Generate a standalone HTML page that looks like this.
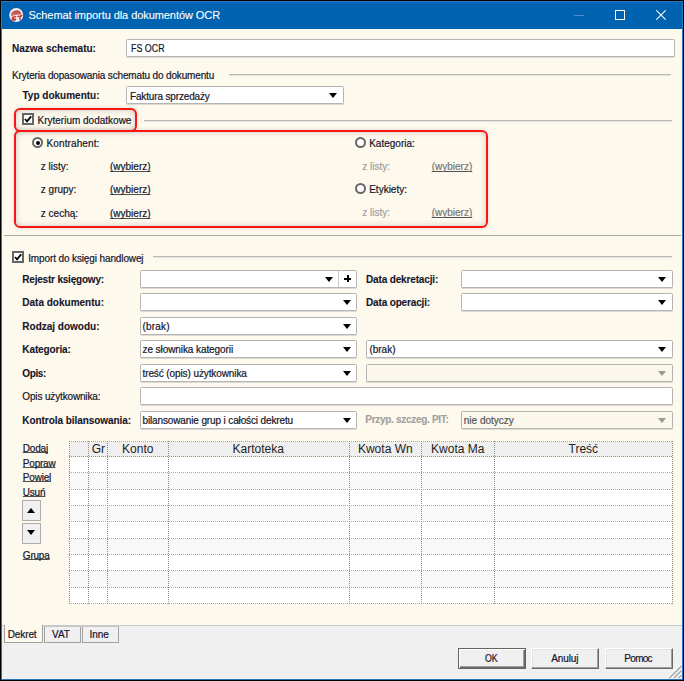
<!DOCTYPE html><html><head><meta charset="utf-8"><style>html,body{margin:0;padding:0;}
body{width:684px;height:681px;position:relative;overflow:hidden;background:#000;font-family:"Liberation Sans",sans-serif;font-size:10px;color:#15152a;}
.a{position:absolute;}
.t{position:absolute;white-space:nowrap;line-height:12px;-webkit-text-stroke:0.2px currentColor;}
.b{-webkit-text-stroke:0.1px currentColor;}
.b{font-weight:bold;}
#win{position:absolute;left:1px;top:1px;width:682px;height:679px;background:#2776bb;}
#title{position:absolute;left:2px;top:2px;width:680px;height:27px;background:#0063b1;}
#client{position:absolute;left:2px;top:29px;width:680px;height:650px;background:#fef9ed;}
.fld{position:absolute;background:#fff;border:1px solid #b4b4b4;border-radius:1.5px;box-sizing:border-box;height:18px;box-shadow:0 1px 0 #dcdad2;}
.fld.dis{background:#fbf7ec;}
.arr{position:absolute;width:0;height:0;border-left:4.5px solid transparent;border-right:4.5px solid transparent;border-top:5px solid #000;}
.arr.g{border-top-color:#9a9a9a;}
.gl{position:absolute;height:1px;background:#b9b9b6;box-shadow:0 1px 0 #e2e2df;}
.lnk{text-decoration:underline;text-decoration-skip-ink:none;text-decoration-thickness:1px;text-underline-offset:0px;text-decoration-color:#505050;}
.gray{color:#a0a0a0;}
.gray2{color:#777;}
.redbox{box-sizing:border-box;border:2px solid #fa1414;border-radius:6px;box-shadow:inset 0 0 6px rgba(0,0,0,0.2), 0 0 4px rgba(0,0,0,0.12);}
.chk{position:absolute;width:12px;height:12px;box-sizing:border-box;border:2px solid #666;background:#fff;}
.rad{position:absolute;width:11px;height:11px;box-sizing:border-box;border:2px solid #666;border-radius:50%;background:#fff;}
.sbtn{position:absolute;width:19px;height:21px;box-sizing:border-box;border:1px solid #adadad;background:#f0f0f0;}
.tab{position:absolute;box-sizing:border-box;border:1px solid #a0a0a0;border-top-color:#c8c8c8;background:#f0f0f0;}
.tab.act{background:#fef9ed;border-top:none;}
.btn{position:absolute;box-sizing:border-box;background:#f0f0f0;border:1px solid;border-color:#fff #696969 #696969 #fff;box-shadow:inset -1px -1px 0 #a0a0a0, inset 1px 1px 0 #e3e3e3;}
.btn.def{border-color:#646464;box-shadow:inset 1px 1px 0 #fff, inset -1px -1px 0 #696969, inset -2px -2px 0 #a0a0a0;}
</style></head><body>
<div id="win"></div><div id="title"></div><div id="client"></div>
<svg class="a" style="left:8px;top:7px" width="17" height="17" viewBox="0 0 17 17">
<defs><linearGradient id="dg" x1="0" y1="0" x2="0" y2="1"><stop offset="0" stop-color="#b04848"/><stop offset="1" stop-color="#d77a7a"/></linearGradient></defs>
<circle cx="8.2" cy="8" r="7" fill="#f4eded"/>
<path d="M3 9.2 A5.4 5.4 0 0 1 13.6 7.4 Q8.5 7.2 3 9.2 Z" fill="url(#dg)"/>
<path d="M8.2 9.9 Q4.6 9.6 4.2 11 Q4.4 11.9 6.4 11.9 Q7.9 12.1 7.2 12.9 L3.6 12.9" stroke="#c83c3c" stroke-width="1.5" fill="none"/>
<path d="M9.2 9.1 L15.4 7.6 L13.2 9.9 L12.7 9.9 L12.7 13 L11.2 13 L11.2 9.9 L9.2 9.9 Z" fill="#c83c3c"/>
</svg>
<div class="t " style="left:28.6px;top:9.09px;font-size:11px;color:#fff;letter-spacing:-0.07px;-webkit-text-stroke:0.1px #fff">Schemat importu dla dokumentów OCR</div>
<div class="a" style="left:574px;top:15px;width:10px;height:1px;background:#4d8fcc"></div>
<div class="a" style="left:615px;top:10px;width:10px;height:10px;box-sizing:border-box;border:1px solid #fff"></div>
<svg class="a" style="left:656px;top:10px" width="10" height="10" viewBox="0 0 10 10"><path d="M0.3 0.3 L9.7 9.7 M9.7 0.3 L0.3 9.7" stroke="#fff" stroke-width="1.05"/></svg>
<div class="t b" style="left:12px;top:43.33px;font-size:10px;">Nazwa schematu:</div>
<div class="fld " style="left:126px;top:39px;width:549px;height:18px"></div>
<div class="t " style="left:130.5px;top:43.33px;font-size:10px;transform:scaleX(0.89);transform-origin:0 0">FS OCR</div>
<div class="t " style="left:12px;top:70.33px;font-size:10px;letter-spacing:-0.15px">Kryteria dopasowania schematu do dokumentu</div>
<div class="gl" style="left:229px;top:74px;width:442px"></div>
<div class="t b" style="left:22.5px;top:90.33px;font-size:10px;">Typ dokumentu:</div>
<div class="fld " style="left:126px;top:86px;width:218px;height:18px"></div>
<div class="t " style="left:130px;top:90.83px;font-size:10px;letter-spacing:-0.15px">Faktura sprzedaży</div>
<div class="arr " style="left:329px;top:93px"></div>
<div class="a redbox" style="left:14px;top:108px;width:123px;height:24px;"></div>
<div class="chk" style="left:22px;top:113px"></div>
<svg class="a" style="left:22px;top:113px" width="12" height="12" viewBox="0 0 12 12"><path d="M3 6 L5 8.3 L9.2 3.3" fill="none" stroke="#000" stroke-width="1.8"/></svg>
<div class="t " style="left:37.5px;top:114.93px;font-size:10px;">Kryterium dodatkowe</div>
<div class="gl" style="left:144px;top:120px;width:528px"></div>
<div class="a redbox" style="left:14px;top:130px;width:474px;height:98px;"></div>
<div class="rad" style="left:32px;top:137px"></div><div class="a" style="left:35.5px;top:140.5px;width:4px;height:4px;border-radius:50%;background:#000"></div>
<div class="t " style="left:46.6px;top:138.14px;font-size:10px;letter-spacing:0.1px">Kontrahent:</div>
<div class="t " style="left:40.8px;top:160.84px;font-size:10px;">z listy:</div>
<div class="t " style="left:40.8px;top:184.34px;font-size:10px;">z grupy:</div>
<div class="t " style="left:40.8px;top:207.84px;font-size:10px;">z cechą:</div>
<div class="t lnk" style="left:110px;top:160.84px;font-size:10px;text-underline-offset:1px">(wybierz)</div>
<div class="t lnk" style="left:110px;top:184.34px;font-size:10px;text-underline-offset:1px">(wybierz)</div>
<div class="t lnk" style="left:110px;top:207.84px;font-size:10px;text-underline-offset:1px">(wybierz)</div>
<div class="rad" style="left:354.5px;top:137px"></div>
<div class="t " style="left:369.2px;top:138.14px;font-size:10px;">Kategoria:</div>
<div class="t gray" style="left:362.2px;top:160.84px;font-size:10px;">z listy:</div>
<div class="t lnk gray2" style="left:431.7px;top:160.84px;font-size:10px;text-underline-offset:1px">(wybierz)</div>
<div class="rad" style="left:354.5px;top:183px"></div>
<div class="t " style="left:369.2px;top:184.14px;font-size:10px;">Etykiety:</div>
<div class="t gray" style="left:362.2px;top:207.03px;font-size:10px;">z listy:</div>
<div class="t lnk gray2" style="left:431.7px;top:207.03px;font-size:10px;text-underline-offset:1px">(wybierz)</div>
<div class="gl" style="left:4px;top:235px;width:677px;background:#a8a8a8;box-shadow:none"></div>
<div class="chk" style="left:12px;top:251px"></div>
<svg class="a" style="left:12px;top:251px" width="12" height="12" viewBox="0 0 12 12"><path d="M3 6 L5 8.3 L9.2 3.3" fill="none" stroke="#000" stroke-width="1.8"/></svg>
<div class="t " style="left:28.2px;top:252.84px;font-size:10px;letter-spacing:-0.12px">Import do księgi handlowej</div>
<div class="gl" style="left:153px;top:256px;width:519px"></div>
<div class="t b" style="left:22.3px;top:273.94px;font-size:10px;letter-spacing:-0.2px">Rejestr księgowy:</div>
<div class="t b" style="left:22.3px;top:296.94px;font-size:10px;letter-spacing:0px">Data dokumentu:</div>
<div class="t b" style="left:22.3px;top:320.94px;font-size:10px;letter-spacing:0px">Rodzaj dowodu:</div>
<div class="t b" style="left:22.3px;top:343.94px;font-size:10px;letter-spacing:-0.1px">Kategoria:</div>
<div class="t b" style="left:22.3px;top:367.94px;font-size:10px;letter-spacing:-0.4px">Opis:</div>
<div class="t " style="left:22.3px;top:390.94px;font-size:10px;letter-spacing:-0.15px">Opis użytkownika:</div>
<div class="t b" style="left:22.3px;top:414.94px;font-size:10px;letter-spacing:-0.06px">Kontrola bilansowania:</div>
<div class="fld " style="left:140px;top:270px;width:217px;height:18px"></div>
<div class="a" style="left:338px;top:271px;width:1px;height:16px;background:#c8c8c8"></div>
<div class="arr " style="left:325px;top:277px"></div>
<div class="a" style="left:344px;top:277.5px;width:7px;height:2px;background:#000"></div><div class="a" style="left:346.5px;top:275px;width:2px;height:7px;background:#000"></div>
<div class="t b" style="left:366px;top:273.94px;font-size:10px;letter-spacing:-0.15px">Data dekretacji:</div>
<div class="fld " style="left:461px;top:270px;width:212px;height:18px"></div>
<div class="arr " style="left:658px;top:276.5px"></div>
<div class="fld " style="left:140px;top:293px;width:217px;height:18px"></div>
<div class="arr " style="left:343px;top:300px"></div>
<div class="t b" style="left:366px;top:296.94px;font-size:10px;letter-spacing:-0.15px">Data operacji:</div>
<div class="fld " style="left:461px;top:293px;width:212px;height:18px"></div>
<div class="arr " style="left:658px;top:300px"></div>
<div class="fld " style="left:140px;top:317px;width:217px;height:18px"></div>
<div class="t " style="left:142.5px;top:320.94px;font-size:10px;letter-spacing:0.2px">(brak)</div>
<div class="arr " style="left:343px;top:323.5px"></div>
<div class="fld " style="left:140px;top:340px;width:217px;height:18px"></div>
<div class="t " style="left:142.5px;top:343.94px;font-size:10px;letter-spacing:-0.08px">ze słownika kategorii</div>
<div class="arr " style="left:343px;top:347px"></div>
<div class="fld " style="left:366px;top:340px;width:307px;height:18px"></div>
<div class="t " style="left:369.4px;top:343.94px;font-size:10px;">(brak)</div>
<div class="arr " style="left:658px;top:347px"></div>
<div class="fld " style="left:140px;top:364px;width:217px;height:18px"></div>
<div class="t " style="left:142.5px;top:367.94px;font-size:10px;letter-spacing:-0.1px">treść (opis) użytkownika</div>
<div class="arr " style="left:343px;top:370.5px"></div>
<div class="fld dis" style="left:366px;top:364px;width:307px;height:18px"></div>
<div class="arr g" style="left:658px;top:370.5px"></div>
<div class="fld " style="left:140px;top:387px;width:533px;height:18px"></div>
<div class="fld " style="left:140px;top:411px;width:217px;height:18px"></div>
<div class="t " style="left:142.5px;top:414.94px;font-size:10px;letter-spacing:-0.13px">bilansowanie grup i całości dekretu</div>
<div class="arr " style="left:343px;top:417.5px"></div>
<div class="t b gray" style="left:365.3px;top:414.44px;font-size:10px;letter-spacing:-0.3px">Przyp. szczeg. PIT:</div>
<div class="fld dis" style="left:461px;top:411px;width:212px;height:18px"></div>
<div class="t " style="left:463.8px;top:414.94px;font-size:10px;color:#555">nie dotyczy</div>
<div class="arr g" style="left:658px;top:417.5px"></div>
<div class="t lnk" style="left:22.8px;top:442.74px;font-size:10px;letter-spacing:-0.2px">Dodaj</div>
<div class="t lnk" style="left:22.8px;top:457.74px;font-size:10px;letter-spacing:-0.2px">Popraw</div>
<div class="t lnk" style="left:22.8px;top:472.34px;font-size:10px;letter-spacing:-0.2px">Powiel</div>
<div class="t lnk" style="left:22.8px;top:486.94px;font-size:10px;letter-spacing:-0.2px">Usuń</div>
<div class="t lnk" style="left:22.8px;top:549.63px;font-size:10px;letter-spacing:-0.2px">Grupa</div>
<div class="sbtn" style="left:22px;top:500px"></div>
<div class="sbtn" style="left:22px;top:523px"></div>
<div class="a" style="left:27px;top:508px;width:0;height:0;border-left:4.5px solid transparent;border-right:4.5px solid transparent;border-bottom:5px solid #000"></div>
<div class="arr " style="left:27px;top:530px"></div>
<svg class="a" style="left:0;top:0" width="684" height="681" shape-rendering="crispEdges"><rect x="70" y="442" width="602" height="14" fill="#efefef"/><rect x="70" y="457" width="602" height="146" fill="#fff"/><rect x="70" y="473" width="602" height="16" fill="#f9f9f9"/><rect x="70" y="506" width="602" height="15" fill="#f9f9f9"/><rect x="70" y="539" width="602" height="15" fill="#f9f9f9"/><rect x="70" y="571" width="602" height="16" fill="#f9f9f9"/><line x1="69" y1="441.5" x2="673" y2="441.5" stroke="#a8a8a8" stroke-dasharray="1 1"/><line x1="69" y1="456.5" x2="673" y2="456.5" stroke="#8a8a8a" stroke-dasharray="1 1"/><line x1="69" y1="472.5" x2="673" y2="472.5" stroke="#a8a8a8" stroke-dasharray="1 1"/><line x1="69" y1="489.5" x2="673" y2="489.5" stroke="#a8a8a8" stroke-dasharray="1 1"/><line x1="69" y1="505.5" x2="673" y2="505.5" stroke="#a8a8a8" stroke-dasharray="1 1"/><line x1="69" y1="521.5" x2="673" y2="521.5" stroke="#a8a8a8" stroke-dasharray="1 1"/><line x1="69" y1="538.5" x2="673" y2="538.5" stroke="#a8a8a8" stroke-dasharray="1 1"/><line x1="69" y1="554.5" x2="673" y2="554.5" stroke="#a8a8a8" stroke-dasharray="1 1"/><line x1="69" y1="570.5" x2="673" y2="570.5" stroke="#a8a8a8" stroke-dasharray="1 1"/><line x1="69" y1="587.5" x2="673" y2="587.5" stroke="#a8a8a8" stroke-dasharray="1 1"/><line x1="69" y1="603.5" x2="673" y2="603.5" stroke="#a8a8a8" stroke-dasharray="1 1"/><line x1="69.5" y1="441" x2="69.5" y2="604" stroke="#8c8c8c" stroke-dasharray="1 1"/><line x1="88.5" y1="441" x2="88.5" y2="604" stroke="#8c8c8c" stroke-dasharray="1 1"/><line x1="107.5" y1="441" x2="107.5" y2="604" stroke="#8c8c8c" stroke-dasharray="1 1"/><line x1="168.5" y1="441" x2="168.5" y2="604" stroke="#8c8c8c" stroke-dasharray="1 1"/><line x1="349.5" y1="441" x2="349.5" y2="604" stroke="#8c8c8c" stroke-dasharray="1 1"/><line x1="421.5" y1="441" x2="421.5" y2="604" stroke="#8c8c8c" stroke-dasharray="1 1"/><line x1="494.5" y1="441" x2="494.5" y2="604" stroke="#8c8c8c" stroke-dasharray="1 1"/><line x1="672.5" y1="441" x2="672.5" y2="604" stroke="#8c8c8c" stroke-dasharray="1 1"/></svg>
<div class="t" style="left:38.400000000000006px;width:120px;text-align:center;top:442.10px;font-size:12px;line-height:14px;color:#222;-webkit-text-stroke:0">Gr</div>
<div class="t" style="left:77.80000000000001px;width:120px;text-align:center;top:442.10px;font-size:12px;line-height:14px;color:#222;-webkit-text-stroke:0">Konto</div>
<div class="t" style="left:198.2px;width:120px;text-align:center;top:442.10px;font-size:12px;line-height:14px;color:#222;-webkit-text-stroke:0">Kartoteka</div>
<div class="t" style="left:325.3px;width:120px;text-align:center;top:442.10px;font-size:12px;line-height:14px;color:#222;-webkit-text-stroke:0">Kwota Wn</div>
<div class="t" style="left:397.8px;width:120px;text-align:center;top:442.10px;font-size:12px;line-height:14px;color:#222;-webkit-text-stroke:0">Kwota Ma</div>
<div class="t" style="left:523.3px;width:120px;text-align:center;top:442.10px;font-size:12px;line-height:14px;color:#222;-webkit-text-stroke:0">Treść</div>
<div class="a" style="left:2px;top:625px;width:680px;height:54px;background:#f0f0f0"></div>
<div class="a" style="left:2px;top:625px;width:680px;height:1px;background:#c8c8c8"></div>
<div class="tab act" style="left:4px;top:625px;width:39px;height:18px"></div>
<div class="tab" style="left:44px;top:626px;width:37px;height:17px"></div>
<div class="tab" style="left:82px;top:626px;width:37px;height:17px"></div>
<div class="t " style="left:7.7px;top:628.63px;font-size:10px;letter-spacing:-0.1px">Dekret</div>
<div class="t " style="left:52px;top:628.63px;font-size:10px;">VAT</div>
<div class="t " style="left:89.4px;top:628.63px;font-size:10px;">Inne</div>
<div class="btn def" style="left:458px;top:648px;width:68px;height:21px"></div>
<div class="btn" style="left:531px;top:648px;width:68px;height:21px"></div>
<div class="btn" style="left:605px;top:648px;width:68px;height:21px"></div>
<div class="t " style="left:485px;top:653.33px;font-size:10px;transform:scaleX(0.88);transform-origin:0 0">OK</div>
<div class="t " style="left:551.2px;top:653.33px;font-size:10px;letter-spacing:-0.1px">Anuluj</div>
<div class="t " style="left:624.3px;top:653.33px;font-size:10px;letter-spacing:-0.7px">Pomoc</div>
<svg class="a" style="left:660px;top:660px" width="24" height="21" viewBox="660 660 24 21"><path d="M669 677.5 L681 665.5 M673.5 677.5 L681 670 M678 677.5 L681 674.5" stroke="#fff" stroke-width="1" transform="translate(-0.7,-0.7)"/><path d="M669.5 678 L681.3 666.2 M674 678 L681.3 670.7 M678.5 678 L681.3 675.2" stroke="#a5a5a5" stroke-width="1.4"/></svg>
</body></html>
